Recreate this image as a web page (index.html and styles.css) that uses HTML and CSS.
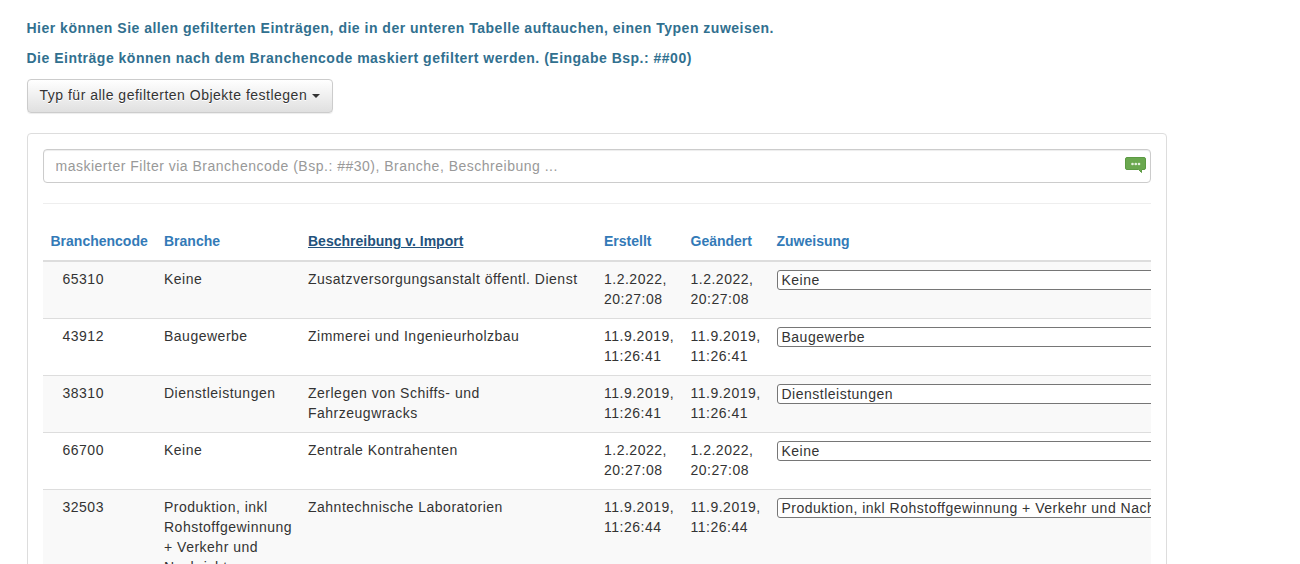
FILE: index.html
```html
<!DOCTYPE html>
<html lang="de">
<head>
<meta charset="utf-8">
<title>Typzuweisung</title>
<link rel="stylesheet" href="styles.css">
</head>
<body>
<main class="page">
  <p class="info">Hier können Sie allen gefilterten Einträgen, die in der unteren Tabelle auftauchen, einen Typen zuweisen.</p>
  <p class="info">Die Einträge können nach dem Branchencode maskiert gefiltert werden. (Eingabe Bsp.: ##00)</p>
  <button class="btn" type="button">Typ für alle gefilterten Objekte festlegen <span class="caret"></span></button>
  <section class="card">
    <div class="search">
      <input class="search-input" type="text" placeholder="maskierter Filter via Branchencode (Bsp.: ##30), Branche, Beschreibung ...">
      <svg class="search-icon" width="21" height="16" viewBox="0 0 21 16" aria-hidden="true">
        <path d="M2 0.500H19A1.500 1.500 0 0 1 20.500 2V11A1.500 1.500 0 0 1 19 12.500H16.500V15.500L13.500 12.500H2A1.500 1.500 0 0 1 0.500 11V2A1.500 1.500 0 0 1 2 0.500Z" fill="#6aa84f" stroke="#5c9a43"/>
        <circle cx="7.500" cy="7" r="1.300" fill="#e4f0de"/>
        <circle cx="10.750" cy="7" r="1.300" fill="#e4f0de"/>
        <circle cx="14" cy="7" r="1.300" fill="#e4f0de"/>
      </svg>
    </div>
    <hr class="rule">
    <div class="table-wrap">
      <table class="grid">
        <colgroup>
          <col class="c-code"><col class="c-branch"><col class="c-desc"><col class="c-date"><col class="c-date2"><col class="c-assign">
        </colgroup>
        <thead>
          <tr>
            <th><a href="#">Branchencode</a></th>
            <th><a href="#">Branche</a></th>
            <th><a href="#" class="sorted">Beschreibung v. Import</a></th>
            <th><a href="#">Erstellt</a></th>
            <th><a href="#">Geändert</a></th>
            <th><a href="#">Zuweisung</a></th>
          </tr>
        </thead>
        <tbody>
          <tr>
            <td class="code">65310</td><td>Keine</td><td>Zusatzversorgungsanstalt öffentl. Dienst</td>
            <td>1.2.2022, 20:27:08</td><td>1.2.2022, 20:27:08</td>
            <td><select class="assign"><option>Keine</option></select></td>
          </tr>
          <tr>
            <td class="code">43912</td><td>Baugewerbe</td><td>Zimmerei und Ingenieurholzbau</td>
            <td>11.9.2019, 11:26:41</td><td>11.9.2019, 11:26:41</td>
            <td><select class="assign"><option>Baugewerbe</option></select></td>
          </tr>
          <tr>
            <td class="code">38310</td><td>Dienstleistungen</td><td>Zerlegen von Schiffs- und Fahrzeugwracks</td>
            <td>11.9.2019, 11:26:41</td><td>11.9.2019, 11:26:41</td>
            <td><select class="assign"><option>Dienstleistungen</option></select></td>
          </tr>
          <tr>
            <td class="code">66700</td><td>Keine</td><td>Zentrale Kontrahenten</td>
            <td>1.2.2022, 20:27:08</td><td>1.2.2022, 20:27:08</td>
            <td><select class="assign"><option>Keine</option></select></td>
          </tr>
          <tr>
            <td class="code">32503</td><td>Produktion, inkl Rohstoffgewinnung + Verkehr und Nachrichten</td><td>Zahntechnische Laboratorien</td>
            <td>11.9.2019, 11:26:44</td><td>11.9.2019, 11:26:44</td>
            <td><select class="assign"><option>Produktion, inkl Rohstoffgewinnung + Verkehr und Nachrichten</option></select></td>
          </tr>
        </tbody>
      </table>
    </div>
  </section>
</main>
</body>
</html>
```
FILE: styles.css
```css
* { box-sizing: border-box; }
html, body { height: 564px; overflow: hidden; }
body {
  margin: 0;
  background: #fff;
  color: #333;
  font-family: "Liberation Sans", Arial, sans-serif;
  font-size: 14px;
  line-height: 20px;
  letter-spacing: 0.5px;
}
.page { width: 1140px; margin-left: 26.500px; padding-top: 18px; }
.info { margin: 0 0 10px; color: #31708f; font-weight: 700; }
.btn {
  display: block;
  height: 34px;
  margin: 11px 0 20px;
  padding: 5px 12px 7px;
  border: 1px solid #ccc;
  border-radius: 4px;
  background: linear-gradient(to bottom, #fff 0, #e0e0e0 100%);
  box-shadow: inset 0 1px 0 rgba(255,255,255,.15), 0 1px 1px rgba(0,0,0,.075);
  color: #333;
  font: inherit;
  letter-spacing: inherit;
  text-shadow: 0 1px 0 #fff;
}
.caret {
  display: inline-block;
  width: 0;
  height: 0;
  vertical-align: middle;
  border-top: 4px solid #333;
  border-left: 4px solid transparent;
  border-right: 4px solid transparent;
}
.card {
  height: 600px;
  padding: 15px;
  border: 1px solid #ddd;
  border-radius: 4px;
}
.search { position: relative; }
.search-input {
  display: block;
  width: 100%;
  height: 34px;
  padding: 6px 12px;
  border: 1px solid #ccc;
  border-radius: 4px;
  box-shadow: inset 0 1px 1px rgba(0,0,0,.075);
  color: #555;
  font: inherit;
  letter-spacing: inherit;
}
.search-input::placeholder { color: #999; opacity: 1; }
.search-icon { position: absolute; top: 8px; right: 4.500px; }
.rule { margin: 20px 0; border: 0; border-top: 1px solid #eee; }
.table-wrap { overflow: hidden; }
.grid { width: 1400px; table-layout: fixed; border-collapse: collapse; border-spacing: 0; }
.c-code { width: 113.500px; }
.c-branch { width: 144px; }
.c-desc { width: 296px; }
.c-date { width: 86.500px; }
.c-date2 { width: 86px; }
.c-assign { width: 674px; }
th {
  padding: 7px 8px 9px;
  border-bottom: 2px solid #ddd;
  text-align: left;
  vertical-align: bottom;
  font-weight: 700;
  letter-spacing: 0;
}
th a { color: #337ab7; text-decoration: none; }
th a.sorted { color: #23527c; text-decoration: underline; }
td {
  padding: 7px 8px 9px;
  border-top: 1px solid #ddd;
  vertical-align: top;
}
thead + tbody tr:first-child td { border-top: 0; }
tbody tr:nth-child(odd) td { background: #f9f9f9; }
td.code { padding-left: 20px; }
.assign {
  display: block;
  width: 600px;
  height: 20px;
  margin-top: 1px;
  padding: 0;
  color: #333;
  font: inherit;
  letter-spacing: inherit;
  background: #fff;
  border: 1px solid #767676;
  border-radius: 3px;
}
```
